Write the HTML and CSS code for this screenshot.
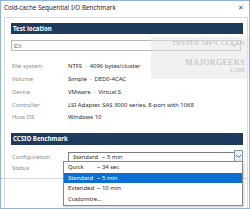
FILE: index.html
```html
<!DOCTYPE html>
<html>
<head>
<meta charset="utf-8">
<link rel="stylesheet" href="styles.css">
</head>
<body>
<div class="window">
  <div class="titlebar">
    <span class="title">Cold-cache Sequential I/O Benchmark</span>
    <span class="close">✕</span>
  </div>
  <div class="panel">
    <div class="header">Test location</div>
    <div class="combo drive">
      <span class="combo-text">C:\</span>
      <svg class="arrow" width="7" height="5" viewBox="0 0 7 5"><path d="M1 1 L3.5 3.5 L6 1" fill="none" stroke="#8a8a8a" stroke-width="1"/></svg>
    </div>
    <div class="info">
      <div class="row"><span class="label">File system</span><span class="value">NTFS &nbsp;·&nbsp; 4096 bytes/cluster</span></div>
      <div class="row"><span class="label">Volume</span><span class="value">Simple &nbsp;·&nbsp; DED0-4CAC</span></div>
      <div class="row"><span class="label">Device</span><span class="value">VMware &nbsp;·&nbsp; Virtual S</span></div>
      <div class="row"><span class="label">Controller</span><span class="value">LSI Adapter, SAS 3000 series, 8-port with 1068</span></div>
      <div class="row"><span class="label">Host OS</span><span class="value">Windows 10</span></div>
    </div>
    <div class="header bench">CCSIO Benchmark</div>
    <div class="config">
      <div class="row crow"><span class="label">Configuration</span>
        <div class="combo cfg">
          <span class="opt-name">Standard</span><span class="opt-time">~ 5 min</span>
          <span class="btn"><svg width="7" height="5" viewBox="0 0 7 5"><path d="M1 1 L3.5 3.5 L6 1" fill="none" stroke="#5a6c80" stroke-width="1"/></svg></span>
        </div>
      </div>
      <div class="row"><span class="label">Status</span></div>
    </div>
    <div class="sep"></div>
    <div class="list">
      <div class="item"><span class="opt-name">Quick</span><span class="opt-time">~ 34 sec</span></div>
      <div class="item sel"><span class="opt-name">Standard</span><span class="opt-time">~ 5 min</span></div>
      <div class="item"><span class="opt-name">Extended</span><span class="opt-time">~ 10 min</span></div>
      <div class="item"><span class="opt-name">Customize...</span></div>
    </div>
  </div>
  <div class="watermark">
    <div class="wm1">TESTED 100% CLEAN</div>
    <div class="wm2">MAJORGEEKS</div>
    <div class="wm3">.COM</div>
  </div>
</div>
</body>
</html>
```
FILE: styles.css
```css
* { box-sizing: border-box; }
html, body { margin: 0; padding: 0; }
body {
  width: 250px;
  height: 209px;
  overflow: hidden;
  background: #ffffff;
  font-family: "Noto Sans", "Open Sans", sans-serif;
  font-size: 5.9px;
  color: #2b2b2b;
}
.window {
  position: relative;
  width: 250px;
  height: 209px;
  border: 1px solid #8fb6da;
  background: #ffffff;
  display: flex;
  flex-direction: column;
}
.titlebar {
  height: 16px;
  display: flex;
  align-items: center;
  justify-content: space-between;
  padding: 0 5px 4px 3px;
}
.title { font-size: 6.3px; color: #1e1e1e; }
.close { font-size: 6.5px; color: #555; }
.panel {
  position: relative;
  flex: 1;
  margin: 0 1px 0 3px;
  border: 1px solid #dcdcdc;
  border-bottom: none;
  padding: 5px 4px 0 6px;
}
.header {
  height: 11px;
  background: #1f3a5c;
  color: #ffffff;
  font-weight: bold;
  font-size: 6.1px;
  line-height: 11px;
  padding-left: 2px;
}
.combo {
  position: relative;
  display: flex;
  align-items: center;
  border: 1px solid #b9b9b9;
  background: #fff;
}
.drive {
  margin-top: 6px;
  height: 11px;
  margin-right: 2px;
  padding-left: 2px;
}
.drive .arrow { position: absolute; right: 2px; top: 2px; }
.info {
  padding-top: 9px;
  padding-bottom: 9px;
}
.row {
  display: flex;
  align-items: center;
  height: 12.75px;
}
.label { width: 57px; color: #8a8a8a; flex: none; padding-left: 1px; }
.value { color: #2b2b2b; white-space: nowrap; }
.bench { height: 12px; line-height: 12px; }
.config { padding-top: 7px; }
.crow { height: 11px; margin-bottom: -1px; }
.cfg {
  flex: 1;
  height: 11px;
  border-color: #7a7a7a;
  padding-left: 4px;
}
.cfg .btn {
  position: absolute;
  right: -1px;
  top: -3px;
  width: 9px;
  height: 13px;
  border: 1px solid #7f98b3;
  background: #e6eef7;
  display: flex;
  align-items: center;
  justify-content: center;
}
.opt-name { width: 29px; flex: none; }
.sep {
  position: absolute;
  left: -4px;
  right: -2px;
  top: 160px;
  border-top: 1px solid #d6d6d6;
}
.list {
  position: absolute;
  left: 58px;
  top: 143px;
  width: 180px;
  border: 1px solid #888;
  background: #ffffff;
  box-shadow: 1px 1px 2px rgba(0,0,0,0.2);
  padding: 0 0 1px 0;
}
.item {
  display: flex;
  align-items: center;
  height: 10.5px;
  padding-left: 4px;
  color: #1e1e1e;
}
.item.sel { background: #0a6fd1; color: #ffffff; }
.watermark {
  position: absolute;
  left: 150px;
  top: 36px;
  width: 98px;
  height: 42px;
  background: rgba(228,228,228,0.5);
  color: rgba(130,130,130,0.4);
  font-family: "Liberation Serif", serif;
  font-weight: bold;
  text-align: right;
  padding: 2px 4px 0 0;
}
.wm1 { font-size: 6.5px; letter-spacing: 0.3px; }
.wm2 { font-size: 8px; margin-top: 12px; letter-spacing: 0.3px; }
.wm3 { font-size: 6px; }
```
